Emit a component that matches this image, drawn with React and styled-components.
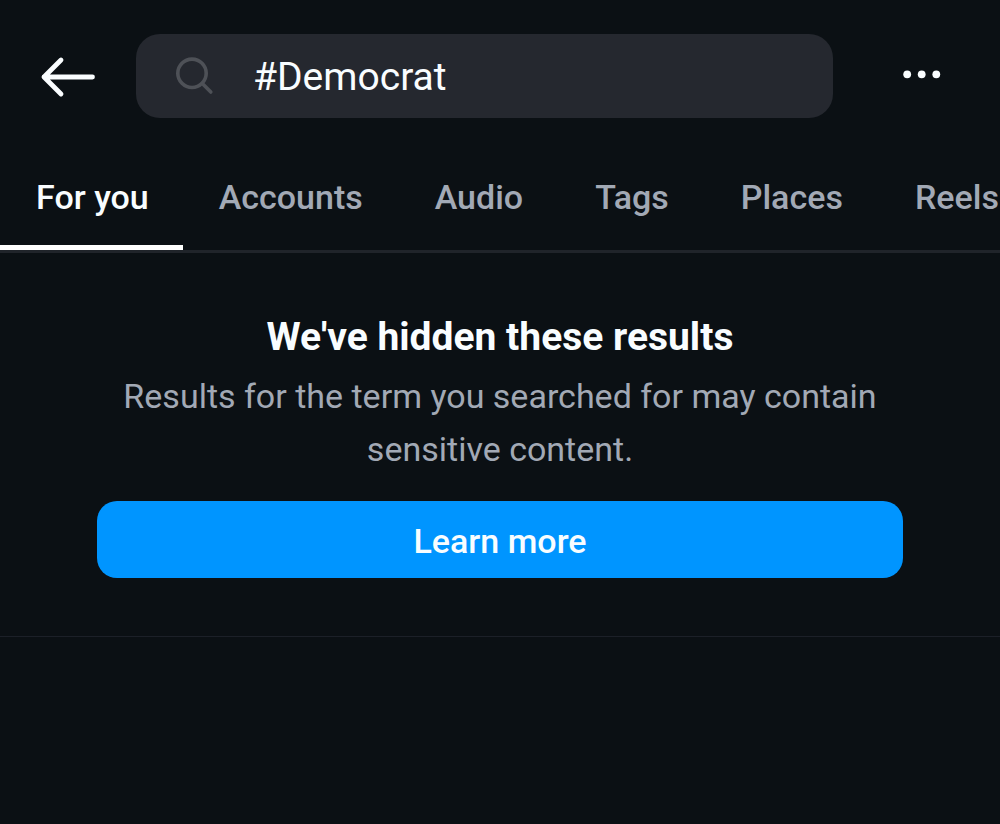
import React, { useState } from "react";
import styled, { createGlobalStyle } from "styled-components";

const TABS = ["For you", "Accounts", "Audio", "Tags", "Places", "Reels"];

export default function App() {
  const [query, setQuery] = useState("#Democrat");
  const [active, setActive] = useState("For you");

  return (
    <>
      <GlobalStyle />
      <Header>
        <IconButton type="button" aria-label="Back">
          <BackIcon />
        </IconButton>
        <SearchBox>
          <SearchIcon />
          <SearchInput
            type="text"
            aria-label="Search"
            value={query}
            onChange={e => setQuery(e.target.value)}
          />
        </SearchBox>
        <IconButton type="button" aria-label="More options">
          <MoreIcon />
        </IconButton>
      </Header>
      <TabBar role="tablist">
        {TABS.map(tab => (
          <Tab
            key={tab}
            type="button"
            role="tab"
            aria-selected={tab === active}
            $active={tab === active}
            onClick={() => setActive(tab)}
          >
            {tab}
          </Tab>
        ))}
      </TabBar>
      <Notice>
        <Title>We've hidden these results</Title>
        <Message>
          Results for the term you searched for may contain sensitive content.
        </Message>
        <LearnMore type="button">Learn more</LearnMore>
      </Notice>
    </>
  );
}

const BackIcon = () => (
  <svg width="56" height="44" viewBox="0 0 56 44" fill="none">
    <path
      d="M21 6 4 23l17 17M4 23h48.5"
      stroke="#fafdff"
      strokeWidth="4.8"
      strokeLinecap="round"
      strokeLinejoin="round"
    />
  </svg>
);

const SearchIcon = () => (
  <svg width="40" height="40" viewBox="0 0 40 40" fill="none">
    <g stroke="#4e5157" strokeWidth="3.6" strokeLinecap="round">
      <circle cx="18" cy="17.3" r="14.2" />
      <path d="m28.3 27.5 8.5 8.5" />
    </g>
  </svg>
);

const MoreIcon = () => (
  <svg width="40" height="40" viewBox="0 0 40 40" fill="#fafdff">
    <circle cx="4.2" cy="18.3" r="3.9" />
    <circle cx="18.7" cy="18.3" r="3.9" />
    <circle cx="33.3" cy="18.3" r="3.9" />
  </svg>
);

const GlobalStyle = createGlobalStyle`
  *,
  *::before,
  *::after {
    box-sizing: border-box;
  }
  body {
    margin: 0;
    min-height: 100vh;
    background: #0b1014;
    color: #f9fdff;
    font-family: Roboto, "Liberation Sans", sans-serif;
  }
  button,
  input {
    font-family: inherit;
  }
  svg {
    display: block;
    flex-shrink: 0;
  }
`;

const Header = styled.header`
  display: flex;
  align-items: center;
  gap: 40px;
  padding: 34px 57px 0 40px;
`;

const IconButton = styled.button`
  flex-shrink: 0;
  padding: 0;
  border: 0;
  background: none;
  cursor: pointer;
  &:last-child {
    margin-left: 30px;
  }
`;

const SearchBox = styled.div`
  flex: 1;
  min-width: 0;
  height: 84px;
  display: flex;
  align-items: center;
  gap: 39px;
  padding: 0 38px;
  border-radius: 24px;
  background: #25282f;
`;

const SearchInput = styled.input`
  flex: 1;
  min-width: 0;
  padding: 2px 0 0;
  border: 0;
  outline: none;
  background: none;
  color: #f9fdff;
  font-size: 39px;
  line-height: 48px;
`;

const TabBar = styled.nav`
  display: flex;
  margin-top: 28px;
  overflow-x: auto;
  overflow-y: hidden;
  scrollbar-width: none;
  border-bottom: 3px solid #20242a;
`;

const Tab = styled.button`
  flex-shrink: 0;
  height: 104px;
  padding: 2px 36px 0;
  border: 0;
  border-bottom: 5px solid ${props => (props.$active ? "#ffffff" : "transparent")};
  background: none;
  color: ${props => (props.$active ? "#f9fdff" : "#a2a9b5")};
  font-size: 34px;
  font-weight: 500;
  line-height: 52px;
  white-space: nowrap;
  cursor: pointer;
  &:first-child {
    padding-right: 34px;
  }
`;

const Notice = styled.main`
  display: flex;
  flex-direction: column;
  padding: 60px 97px 58px;
  border-bottom: 1px solid #1c2028;
  text-align: center;
`;

const Title = styled.h1`
  margin: 0;
  font-size: 39px;
  font-weight: 700;
  line-height: 48px;
`;

const Message = styled.p`
  margin: 9px 0 25px;
  color: #a2a9b5;
  font-size: 34px;
  line-height: 53px;
`;

const LearnMore = styled.button`
  height: 77px;
  padding: 2px 0 0;
  border: 0;
  border-radius: 20px;
  background: #0095ff;
  color: #f9fdff;
  font-size: 34px;
  font-weight: 500;
  line-height: 52px;
  cursor: pointer;
`;
